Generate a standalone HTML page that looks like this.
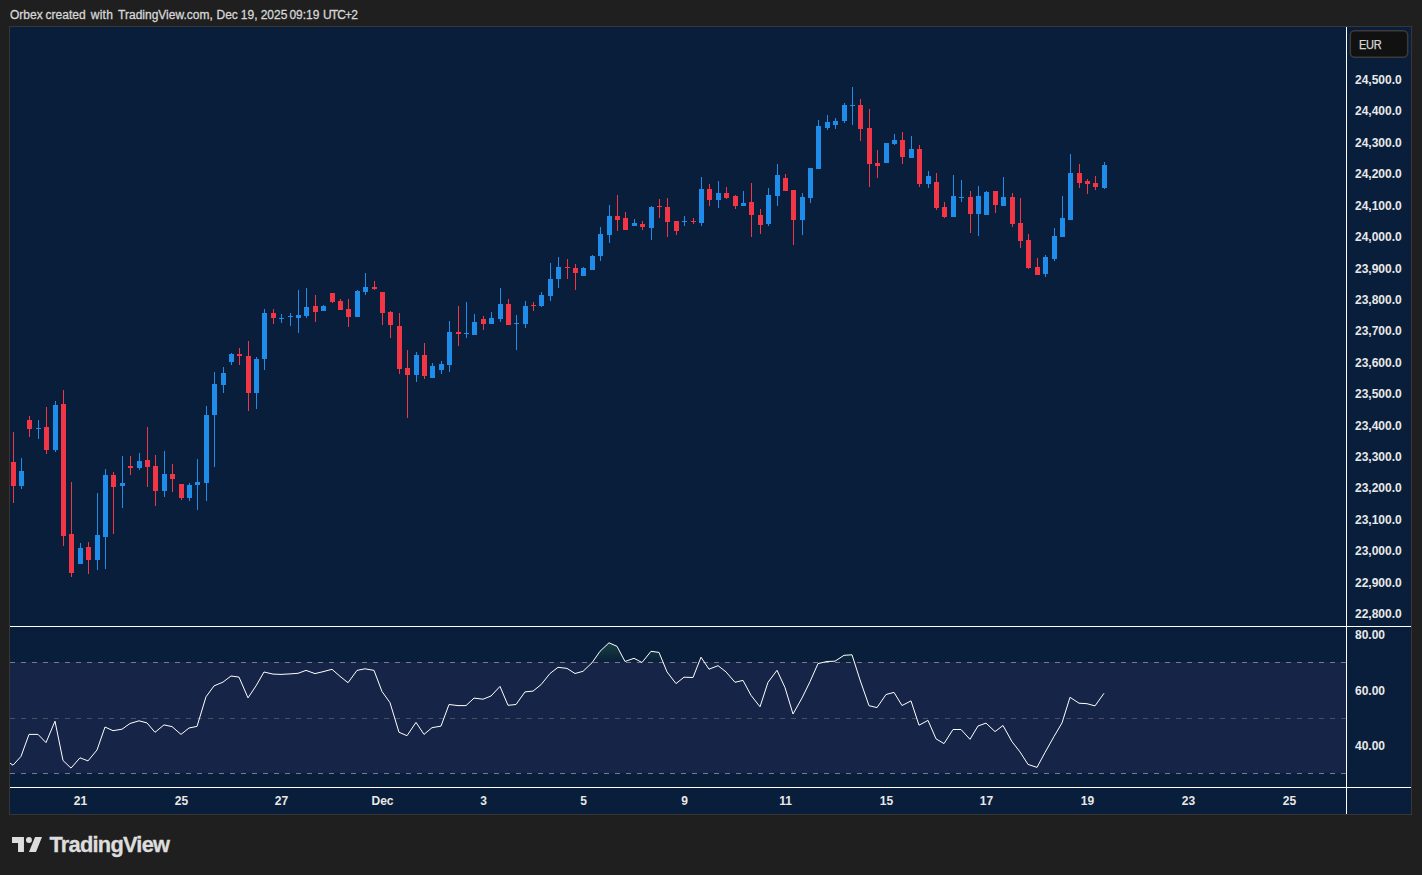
<!DOCTYPE html>
<html><head><meta charset="utf-8"><style>
html,body{margin:0;padding:0;}
body{width:1422px;height:875px;background:#1f1f1f;position:relative;overflow:hidden;font-family:"Liberation Sans",sans-serif;}
.hdr{position:absolute;left:10px;top:8px;font-size:12px;color:#d6d6d6;white-space:nowrap;-webkit-text-stroke:0.3px #d6d6d6;}
.pl{position:absolute;left:1355px;height:14px;line-height:14px;font-size:12px;font-weight:bold;color:#e8e8e8;white-space:nowrap;}
.tl{position:absolute;top:794px;width:60px;text-align:center;height:14px;line-height:14px;font-size:12px;font-weight:bold;color:#e8e8e8;white-space:nowrap;}
.eur{position:absolute;left:1358.5px;top:38px;height:14px;line-height:14px;font-size:12px;color:#d6d6d6;letter-spacing:-0.3px;-webkit-text-stroke:0.25px #d6d6d6;transform:scaleX(0.92);transform-origin:0 0;}
.tv{position:absolute;left:49.5px;top:831.5px;font-size:21.8px;font-weight:bold;color:#dddddd;line-height:26px;letter-spacing:-0.75px;-webkit-text-stroke:0.35px #dddddd;}
</style></head><body>
<svg width="1422" height="875" viewBox="0 0 1422 875" style="position:absolute;left:0;top:0">
<defs>
<clipPath id="cp"><rect x="10" y="27" width="1336" height="599"/></clipPath>
<clipPath id="cr"><rect x="10" y="627" width="1336" height="160"/></clipPath>
<clipPath id="cob"><rect x="10" y="560" width="1336" height="102.5"/></clipPath>
<linearGradient id="gob" gradientUnits="userSpaceOnUse" x1="0" y1="579.2" x2="0" y2="662.5">
<stop offset="0" stop-color="#4caf50" stop-opacity="1"/><stop offset="1" stop-color="#4caf50" stop-opacity="0"/>
</linearGradient>
</defs>
<rect x="9" y="26" width="1403" height="789" fill="#363636"/>
<rect x="10" y="27" width="1401" height="787" fill="#091e3b"/>
<g clip-path="url(#cp)" shape-rendering="crispEdges"><rect x="13" y="432" width="1" height="71" fill="#f23645"/><rect x="11" y="462" width="5" height="24" fill="#f23645"/><rect x="21" y="458" width="1" height="31" fill="#1e8ce8"/><rect x="19" y="471" width="5" height="15" fill="#1e8ce8"/><rect x="29" y="416" width="1" height="21" fill="#f23645"/><rect x="27" y="420" width="5" height="9" fill="#f23645"/><rect x="38" y="420" width="1" height="19" fill="#1e8ce8"/><rect x="36" y="428" width="5" height="1" fill="#1e8ce8"/><rect x="46" y="407" width="1" height="47" fill="#f23645"/><rect x="44" y="427" width="5" height="23" fill="#f23645"/><rect x="55" y="401" width="1" height="51" fill="#1e8ce8"/><rect x="53" y="405" width="5" height="45" fill="#1e8ce8"/><rect x="63" y="390" width="1" height="156" fill="#f23645"/><rect x="61" y="404" width="5" height="132" fill="#f23645"/><rect x="71" y="482" width="1" height="95" fill="#f23645"/><rect x="69" y="534" width="5" height="39" fill="#f23645"/><rect x="80" y="543" width="1" height="21" fill="#1e8ce8"/><rect x="78" y="548" width="5" height="16" fill="#1e8ce8"/><rect x="88" y="542" width="1" height="32" fill="#f23645"/><rect x="86" y="547" width="5" height="13" fill="#f23645"/><rect x="97" y="493" width="1" height="77" fill="#1e8ce8"/><rect x="95" y="535" width="5" height="25" fill="#1e8ce8"/><rect x="105" y="469" width="1" height="100" fill="#1e8ce8"/><rect x="103" y="475" width="5" height="62" fill="#1e8ce8"/><rect x="113" y="472" width="1" height="62" fill="#f23645"/><rect x="111" y="475" width="5" height="12" fill="#f23645"/><rect x="122" y="456" width="1" height="52" fill="#1e8ce8"/><rect x="120" y="483" width="5" height="3" fill="#1e8ce8"/><rect x="130" y="456" width="1" height="19" fill="#f23645"/><rect x="128" y="466" width="5" height="2" fill="#f23645"/><rect x="139" y="453" width="1" height="17" fill="#1e8ce8"/><rect x="137" y="461" width="5" height="7" fill="#1e8ce8"/><rect x="147" y="427" width="1" height="60" fill="#f23645"/><rect x="145" y="460" width="5" height="7" fill="#f23645"/><rect x="155" y="455" width="1" height="51" fill="#f23645"/><rect x="153" y="466" width="5" height="25" fill="#f23645"/><rect x="164" y="451" width="1" height="46" fill="#1e8ce8"/><rect x="162" y="474" width="5" height="17" fill="#1e8ce8"/><rect x="172" y="464" width="1" height="28" fill="#f23645"/><rect x="170" y="474" width="5" height="5" fill="#f23645"/><rect x="181" y="484" width="1" height="16" fill="#f23645"/><rect x="179" y="484" width="5" height="14" fill="#f23645"/><rect x="189" y="483" width="1" height="18" fill="#1e8ce8"/><rect x="187" y="485" width="5" height="13" fill="#1e8ce8"/><rect x="197" y="459" width="1" height="51" fill="#1e8ce8"/><rect x="195" y="482" width="5" height="3" fill="#1e8ce8"/><rect x="206" y="406" width="1" height="95" fill="#1e8ce8"/><rect x="204" y="415" width="5" height="68" fill="#1e8ce8"/><rect x="214" y="372" width="1" height="95" fill="#1e8ce8"/><rect x="212" y="384" width="5" height="31" fill="#1e8ce8"/><rect x="223" y="367" width="1" height="26" fill="#1e8ce8"/><rect x="221" y="373" width="5" height="12" fill="#1e8ce8"/><rect x="231" y="353" width="1" height="12" fill="#1e8ce8"/><rect x="229" y="354" width="5" height="8" fill="#1e8ce8"/><rect x="239" y="348" width="1" height="17" fill="#f23645"/><rect x="237" y="354" width="5" height="2" fill="#f23645"/><rect x="248" y="341" width="1" height="70" fill="#f23645"/><rect x="246" y="356" width="5" height="37" fill="#f23645"/><rect x="256" y="357" width="1" height="52" fill="#1e8ce8"/><rect x="254" y="359" width="5" height="34" fill="#1e8ce8"/><rect x="264" y="309" width="1" height="61" fill="#1e8ce8"/><rect x="262" y="313" width="5" height="46" fill="#1e8ce8"/><rect x="273" y="309" width="1" height="15" fill="#f23645"/><rect x="271" y="313" width="5" height="5" fill="#f23645"/><rect x="281" y="314" width="1" height="9" fill="#1e8ce8"/><rect x="279" y="318" width="5" height="1" fill="#1e8ce8"/><rect x="290" y="313" width="1" height="13" fill="#1e8ce8"/><rect x="288" y="316" width="5" height="1" fill="#1e8ce8"/><rect x="298" y="290" width="1" height="43" fill="#1e8ce8"/><rect x="296" y="315" width="5" height="3" fill="#1e8ce8"/><rect x="306" y="288" width="1" height="30" fill="#1e8ce8"/><rect x="304" y="307" width="5" height="9" fill="#1e8ce8"/><rect x="315" y="295" width="1" height="27" fill="#f23645"/><rect x="313" y="306" width="5" height="6" fill="#f23645"/><rect x="323" y="305" width="1" height="6" fill="#1e8ce8"/><rect x="321" y="306" width="5" height="5" fill="#1e8ce8"/><rect x="332" y="293" width="1" height="10" fill="#f23645"/><rect x="330" y="293" width="5" height="9" fill="#f23645"/><rect x="340" y="299" width="1" height="11" fill="#f23645"/><rect x="338" y="301" width="5" height="9" fill="#f23645"/><rect x="348" y="299" width="1" height="28" fill="#f23645"/><rect x="346" y="309" width="5" height="8" fill="#f23645"/><rect x="357" y="290" width="1" height="27" fill="#1e8ce8"/><rect x="355" y="291" width="5" height="26" fill="#1e8ce8"/><rect x="365" y="273" width="1" height="22" fill="#1e8ce8"/><rect x="363" y="287" width="5" height="5" fill="#1e8ce8"/><rect x="374" y="281" width="1" height="9" fill="#f23645"/><rect x="372" y="287" width="5" height="2" fill="#f23645"/><rect x="382" y="292" width="1" height="33" fill="#f23645"/><rect x="380" y="292" width="5" height="21" fill="#f23645"/><rect x="390" y="311" width="1" height="27" fill="#f23645"/><rect x="388" y="312" width="5" height="13" fill="#f23645"/><rect x="399" y="313" width="1" height="61" fill="#f23645"/><rect x="397" y="326" width="5" height="43" fill="#f23645"/><rect x="407" y="350" width="1" height="68" fill="#f23645"/><rect x="405" y="368" width="5" height="7" fill="#f23645"/><rect x="416" y="352" width="1" height="30" fill="#1e8ce8"/><rect x="414" y="355" width="5" height="20" fill="#1e8ce8"/><rect x="424" y="343" width="1" height="36" fill="#f23645"/><rect x="422" y="355" width="5" height="21" fill="#f23645"/><rect x="432" y="363" width="1" height="15" fill="#1e8ce8"/><rect x="430" y="366" width="5" height="12" fill="#1e8ce8"/><rect x="441" y="361" width="1" height="13" fill="#1e8ce8"/><rect x="439" y="364" width="5" height="6" fill="#1e8ce8"/><rect x="449" y="321" width="1" height="51" fill="#1e8ce8"/><rect x="447" y="332" width="5" height="33" fill="#1e8ce8"/><rect x="458" y="306" width="1" height="40" fill="#f23645"/><rect x="456" y="332" width="5" height="2" fill="#f23645"/><rect x="466" y="302" width="1" height="36" fill="#1e8ce8"/><rect x="464" y="333" width="5" height="1" fill="#1e8ce8"/><rect x="474" y="314" width="1" height="21" fill="#1e8ce8"/><rect x="472" y="322" width="5" height="13" fill="#1e8ce8"/><rect x="483" y="316" width="1" height="14" fill="#f23645"/><rect x="481" y="319" width="5" height="5" fill="#f23645"/><rect x="491" y="312" width="1" height="12" fill="#1e8ce8"/><rect x="489" y="318" width="5" height="6" fill="#1e8ce8"/><rect x="500" y="288" width="1" height="34" fill="#1e8ce8"/><rect x="498" y="304" width="5" height="15" fill="#1e8ce8"/><rect x="508" y="299" width="1" height="26" fill="#f23645"/><rect x="506" y="304" width="5" height="21" fill="#f23645"/><rect x="516" y="315" width="1" height="35" fill="#1e8ce8"/><rect x="514" y="323" width="5" height="1" fill="#1e8ce8"/><rect x="525" y="301" width="1" height="27" fill="#1e8ce8"/><rect x="523" y="306" width="5" height="18" fill="#1e8ce8"/><rect x="533" y="302" width="1" height="9" fill="#f23645"/><rect x="531" y="305" width="5" height="1" fill="#f23645"/><rect x="541" y="292" width="1" height="15" fill="#1e8ce8"/><rect x="539" y="295" width="5" height="11" fill="#1e8ce8"/><rect x="550" y="263" width="1" height="38" fill="#1e8ce8"/><rect x="548" y="279" width="5" height="17" fill="#1e8ce8"/><rect x="558" y="257" width="1" height="31" fill="#1e8ce8"/><rect x="556" y="267" width="5" height="12" fill="#1e8ce8"/><rect x="567" y="259" width="1" height="20" fill="#f23645"/><rect x="565" y="267" width="5" height="1" fill="#f23645"/><rect x="575" y="264" width="1" height="26" fill="#f23645"/><rect x="573" y="268" width="5" height="5" fill="#f23645"/><rect x="583" y="267" width="1" height="9" fill="#1e8ce8"/><rect x="581" y="268" width="5" height="8" fill="#1e8ce8"/><rect x="592" y="255" width="1" height="15" fill="#1e8ce8"/><rect x="590" y="256" width="5" height="14" fill="#1e8ce8"/><rect x="600" y="227" width="1" height="34" fill="#1e8ce8"/><rect x="598" y="234" width="5" height="22" fill="#1e8ce8"/><rect x="609" y="205" width="1" height="38" fill="#1e8ce8"/><rect x="607" y="216" width="5" height="19" fill="#1e8ce8"/><rect x="617" y="195" width="1" height="36" fill="#f23645"/><rect x="615" y="216" width="5" height="4" fill="#f23645"/><rect x="625" y="212" width="1" height="18" fill="#f23645"/><rect x="623" y="218" width="5" height="12" fill="#f23645"/><rect x="634" y="219" width="1" height="7" fill="#1e8ce8"/><rect x="632" y="223" width="5" height="3" fill="#1e8ce8"/><rect x="642" y="221" width="1" height="9" fill="#f23645"/><rect x="640" y="224" width="5" height="3" fill="#f23645"/><rect x="651" y="206" width="1" height="34" fill="#1e8ce8"/><rect x="649" y="207" width="5" height="21" fill="#1e8ce8"/><rect x="659" y="199" width="1" height="19" fill="#f23645"/><rect x="657" y="206" width="5" height="1" fill="#f23645"/><rect x="667" y="198" width="1" height="39" fill="#f23645"/><rect x="665" y="207" width="5" height="15" fill="#f23645"/><rect x="676" y="221" width="1" height="14" fill="#f23645"/><rect x="674" y="221" width="5" height="10" fill="#f23645"/><rect x="684" y="216" width="1" height="10" fill="#1e8ce8"/><rect x="682" y="221" width="5" height="1" fill="#1e8ce8"/><rect x="693" y="218" width="1" height="6" fill="#f23645"/><rect x="691" y="221" width="5" height="1" fill="#f23645"/><rect x="701" y="177" width="1" height="49" fill="#1e8ce8"/><rect x="699" y="189" width="5" height="34" fill="#1e8ce8"/><rect x="709" y="184" width="1" height="22" fill="#f23645"/><rect x="707" y="189" width="5" height="11" fill="#f23645"/><rect x="718" y="181" width="1" height="27" fill="#1e8ce8"/><rect x="716" y="193" width="5" height="7" fill="#1e8ce8"/><rect x="726" y="187" width="1" height="12" fill="#f23645"/><rect x="724" y="193" width="5" height="5" fill="#f23645"/><rect x="735" y="195" width="1" height="14" fill="#f23645"/><rect x="733" y="196" width="5" height="10" fill="#f23645"/><rect x="743" y="191" width="1" height="15" fill="#1e8ce8"/><rect x="741" y="203" width="5" height="3" fill="#1e8ce8"/><rect x="751" y="183" width="1" height="54" fill="#f23645"/><rect x="749" y="202" width="5" height="13" fill="#f23645"/><rect x="760" y="209" width="1" height="25" fill="#f23645"/><rect x="758" y="215" width="5" height="10" fill="#f23645"/><rect x="768" y="188" width="1" height="38" fill="#1e8ce8"/><rect x="766" y="195" width="5" height="29" fill="#1e8ce8"/><rect x="777" y="164" width="1" height="42" fill="#1e8ce8"/><rect x="775" y="175" width="5" height="21" fill="#1e8ce8"/><rect x="785" y="174" width="1" height="17" fill="#f23645"/><rect x="783" y="178" width="5" height="13" fill="#f23645"/><rect x="793" y="190" width="1" height="55" fill="#f23645"/><rect x="791" y="190" width="5" height="30" fill="#f23645"/><rect x="802" y="193" width="1" height="42" fill="#1e8ce8"/><rect x="800" y="197" width="5" height="23" fill="#1e8ce8"/><rect x="810" y="168" width="1" height="35" fill="#1e8ce8"/><rect x="808" y="168" width="5" height="30" fill="#1e8ce8"/><rect x="818" y="120" width="1" height="49" fill="#1e8ce8"/><rect x="816" y="126" width="5" height="43" fill="#1e8ce8"/><rect x="827" y="115" width="1" height="15" fill="#1e8ce8"/><rect x="825" y="122" width="5" height="6" fill="#1e8ce8"/><rect x="835" y="118" width="1" height="11" fill="#1e8ce8"/><rect x="833" y="121" width="5" height="4" fill="#1e8ce8"/><rect x="844" y="103" width="1" height="20" fill="#1e8ce8"/><rect x="842" y="105" width="5" height="16" fill="#1e8ce8"/><rect x="852" y="87" width="1" height="38" fill="#1e8ce8"/><rect x="850" y="105" width="5" height="1" fill="#1e8ce8"/><rect x="860" y="99" width="1" height="42" fill="#f23645"/><rect x="858" y="105" width="5" height="24" fill="#f23645"/><rect x="869" y="109" width="1" height="78" fill="#f23645"/><rect x="867" y="128" width="5" height="36" fill="#f23645"/><rect x="877" y="150" width="1" height="28" fill="#f23645"/><rect x="875" y="163" width="5" height="3" fill="#f23645"/><rect x="886" y="143" width="1" height="20" fill="#1e8ce8"/><rect x="884" y="143" width="5" height="20" fill="#1e8ce8"/><rect x="894" y="134" width="1" height="11" fill="#1e8ce8"/><rect x="892" y="140" width="5" height="4" fill="#1e8ce8"/><rect x="902" y="132" width="1" height="32" fill="#f23645"/><rect x="900" y="140" width="5" height="17" fill="#f23645"/><rect x="911" y="136" width="1" height="22" fill="#1e8ce8"/><rect x="909" y="149" width="5" height="9" fill="#1e8ce8"/><rect x="919" y="145" width="1" height="42" fill="#f23645"/><rect x="917" y="149" width="5" height="35" fill="#f23645"/><rect x="928" y="171" width="1" height="17" fill="#1e8ce8"/><rect x="926" y="176" width="5" height="8" fill="#1e8ce8"/><rect x="936" y="173" width="1" height="37" fill="#f23645"/><rect x="934" y="182" width="5" height="26" fill="#f23645"/><rect x="944" y="202" width="1" height="16" fill="#f23645"/><rect x="942" y="207" width="5" height="10" fill="#f23645"/><rect x="953" y="175" width="1" height="42" fill="#1e8ce8"/><rect x="951" y="196" width="5" height="21" fill="#1e8ce8"/><rect x="961" y="180" width="1" height="22" fill="#1e8ce8"/><rect x="959" y="197" width="5" height="1" fill="#1e8ce8"/><rect x="970" y="191" width="1" height="42" fill="#f23645"/><rect x="968" y="197" width="5" height="17" fill="#f23645"/><rect x="978" y="186" width="1" height="50" fill="#1e8ce8"/><rect x="976" y="196" width="5" height="18" fill="#1e8ce8"/><rect x="986" y="191" width="1" height="24" fill="#1e8ce8"/><rect x="984" y="192" width="5" height="23" fill="#1e8ce8"/><rect x="995" y="191" width="1" height="22" fill="#f23645"/><rect x="993" y="191" width="5" height="14" fill="#f23645"/><rect x="1003" y="177" width="1" height="29" fill="#1e8ce8"/><rect x="1001" y="197" width="5" height="9" fill="#1e8ce8"/><rect x="1012" y="193" width="1" height="34" fill="#f23645"/><rect x="1010" y="197" width="5" height="27" fill="#f23645"/><rect x="1020" y="198" width="1" height="50" fill="#f23645"/><rect x="1018" y="223" width="5" height="18" fill="#f23645"/><rect x="1028" y="234" width="1" height="35" fill="#f23645"/><rect x="1026" y="240" width="5" height="28" fill="#f23645"/><rect x="1037" y="258" width="1" height="17" fill="#f23645"/><rect x="1035" y="267" width="5" height="8" fill="#f23645"/><rect x="1045" y="255" width="1" height="22" fill="#1e8ce8"/><rect x="1043" y="257" width="5" height="17" fill="#1e8ce8"/><rect x="1054" y="228" width="1" height="33" fill="#1e8ce8"/><rect x="1052" y="236" width="5" height="23" fill="#1e8ce8"/><rect x="1062" y="196" width="1" height="41" fill="#1e8ce8"/><rect x="1060" y="218" width="5" height="19" fill="#1e8ce8"/><rect x="1070" y="154" width="1" height="66" fill="#1e8ce8"/><rect x="1068" y="173" width="5" height="47" fill="#1e8ce8"/><rect x="1079" y="164" width="1" height="24" fill="#f23645"/><rect x="1077" y="173" width="5" height="10" fill="#f23645"/><rect x="1087" y="179" width="1" height="15" fill="#f23645"/><rect x="1085" y="181" width="5" height="3" fill="#f23645"/><rect x="1095" y="176" width="1" height="14" fill="#f23645"/><rect x="1093" y="183" width="5" height="4" fill="#f23645"/><rect x="1104" y="162" width="1" height="27" fill="#1e8ce8"/><rect x="1102" y="165" width="5" height="23" fill="#1e8ce8"/></g>
<g clip-path="url(#cr)">
<rect x="10" y="662" width="1336" height="111" fill="#162448" shape-rendering="crispEdges"/>
<line x1="10" y1="662.5" x2="1346" y2="662.5" stroke="#787b86" stroke-width="1" stroke-dasharray="5 6" shape-rendering="crispEdges"/>
<line x1="10" y1="718.5" x2="1346" y2="718.5" stroke="#787b86" stroke-opacity="0.5" stroke-width="1" stroke-dasharray="5 6" shape-rendering="crispEdges"/>
<line x1="10" y1="773.5" x2="1346" y2="773.5" stroke="#787b86" stroke-width="1" stroke-dasharray="5 6" shape-rendering="crispEdges"/>
<g clip-path="url(#cob)"><polygon points="4.00,662.50 4.00,759.00 13.00,765.20 21.00,756.40 29.00,734.40 38.00,734.40 46.00,742.60 55.00,721.20 63.00,760.50 71.00,768.10 80.00,757.80 88.00,760.90 97.00,750.00 105.00,727.00 113.00,730.70 122.00,729.20 130.00,723.50 139.00,720.80 147.00,722.90 155.00,732.30 164.00,724.90 172.00,726.60 181.00,734.40 189.00,728.00 197.00,726.40 206.00,696.80 214.00,685.90 223.00,682.10 231.00,676.00 239.00,677.10 248.00,697.90 256.00,685.90 264.00,672.00 273.00,674.10 281.00,674.40 290.00,673.90 298.00,673.30 306.00,670.40 315.00,673.60 323.00,671.70 332.00,669.30 340.00,676.30 348.00,682.70 357.00,670.40 365.00,668.80 374.00,670.40 382.00,691.50 390.00,702.70 399.00,732.30 407.00,735.70 416.00,722.40 424.00,734.40 432.00,727.70 441.00,726.10 449.00,704.50 458.00,705.60 466.00,705.60 474.00,698.10 483.00,699.20 491.00,696.00 500.00,686.40 508.00,705.30 516.00,704.50 525.00,691.90 533.00,691.10 541.00,684.70 550.00,673.50 558.00,667.30 567.00,668.40 575.00,673.50 583.00,671.30 592.00,662.80 600.00,651.30 609.00,642.80 617.00,646.30 625.00,661.50 634.00,658.30 642.00,662.50 651.00,651.30 659.00,652.40 667.00,671.90 676.00,683.60 684.00,677.20 693.00,677.50 701.00,657.20 709.00,669.20 718.00,665.70 726.00,671.90 735.00,682.30 743.00,680.40 751.00,695.30 760.00,706.80 768.00,682.30 777.00,670.30 785.00,687.60 793.00,714.00 802.00,698.00 810.00,681.70 818.00,663.60 827.00,661.50 835.00,661.20 844.00,655.30 852.00,654.80 860.00,679.90 869.00,705.70 877.00,707.60 886.00,694.50 894.00,692.40 902.00,705.50 911.00,700.90 919.00,725.20 928.00,720.40 936.00,738.80 944.00,743.60 953.00,729.50 961.00,729.50 970.00,739.30 978.00,726.00 986.00,723.10 995.00,731.60 1003.00,725.50 1012.00,741.70 1020.00,751.90 1028.00,764.40 1037.00,767.40 1045.00,752.50 1054.00,736.50 1062.00,722.90 1070.00,697.30 1079.00,703.20 1087.00,703.70 1095.00,705.90 1104.00,693.30 1104.00,662.50" fill="url(#gob)"/></g>
<polyline points="4.00,759.00 13.00,765.20 21.00,756.40 29.00,734.40 38.00,734.40 46.00,742.60 55.00,721.20 63.00,760.50 71.00,768.10 80.00,757.80 88.00,760.90 97.00,750.00 105.00,727.00 113.00,730.70 122.00,729.20 130.00,723.50 139.00,720.80 147.00,722.90 155.00,732.30 164.00,724.90 172.00,726.60 181.00,734.40 189.00,728.00 197.00,726.40 206.00,696.80 214.00,685.90 223.00,682.10 231.00,676.00 239.00,677.10 248.00,697.90 256.00,685.90 264.00,672.00 273.00,674.10 281.00,674.40 290.00,673.90 298.00,673.30 306.00,670.40 315.00,673.60 323.00,671.70 332.00,669.30 340.00,676.30 348.00,682.70 357.00,670.40 365.00,668.80 374.00,670.40 382.00,691.50 390.00,702.70 399.00,732.30 407.00,735.70 416.00,722.40 424.00,734.40 432.00,727.70 441.00,726.10 449.00,704.50 458.00,705.60 466.00,705.60 474.00,698.10 483.00,699.20 491.00,696.00 500.00,686.40 508.00,705.30 516.00,704.50 525.00,691.90 533.00,691.10 541.00,684.70 550.00,673.50 558.00,667.30 567.00,668.40 575.00,673.50 583.00,671.30 592.00,662.80 600.00,651.30 609.00,642.80 617.00,646.30 625.00,661.50 634.00,658.30 642.00,662.50 651.00,651.30 659.00,652.40 667.00,671.90 676.00,683.60 684.00,677.20 693.00,677.50 701.00,657.20 709.00,669.20 718.00,665.70 726.00,671.90 735.00,682.30 743.00,680.40 751.00,695.30 760.00,706.80 768.00,682.30 777.00,670.30 785.00,687.60 793.00,714.00 802.00,698.00 810.00,681.70 818.00,663.60 827.00,661.50 835.00,661.20 844.00,655.30 852.00,654.80 860.00,679.90 869.00,705.70 877.00,707.60 886.00,694.50 894.00,692.40 902.00,705.50 911.00,700.90 919.00,725.20 928.00,720.40 936.00,738.80 944.00,743.60 953.00,729.50 961.00,729.50 970.00,739.30 978.00,726.00 986.00,723.10 995.00,731.60 1003.00,725.50 1012.00,741.70 1020.00,751.90 1028.00,764.40 1037.00,767.40 1045.00,752.50 1054.00,736.50 1062.00,722.90 1070.00,697.30 1079.00,703.20 1087.00,703.70 1095.00,705.90 1104.00,693.30" fill="none" stroke="#ffffff" stroke-width="1" stroke-linejoin="round"/>
</g>
<g shape-rendering="crispEdges" fill="#ffffff">
<rect x="10" y="626" width="1401" height="1"/>
<rect x="10" y="787" width="1401" height="1"/>
<rect x="1346" y="27" width="1" height="787"/>
</g>
<rect x="1350.3" y="30.8" width="57.4" height="26.4" rx="4.5" ry="4.5" fill="#111111" stroke="#3b3b3b" stroke-width="1.5"/>
</svg>
<div class="hdr" style="left:10.00px;letter-spacing:0px">Orbex</div><div class="hdr" style="left:45.60px;letter-spacing:0px">created</div><div class="hdr" style="left:90.70px;letter-spacing:0.3px">with</div><div class="hdr" style="left:118.10px;letter-spacing:0px">TradingView.com,</div><div class="hdr" style="left:216.50px;letter-spacing:0px">Dec</div><div class="hdr" style="left:240.80px;letter-spacing:0px">19,</div><div class="hdr" style="left:260.70px;letter-spacing:0px">2025</div><div class="hdr" style="left:289.40px;letter-spacing:0px">09:19</div><div class="hdr" style="left:323.10px;letter-spacing:-0.9px">UTC+2</div>
<div class="pl" style="top:72.5px">24,500.0</div><div class="pl" style="top:103.5px">24,400.0</div><div class="pl" style="top:135.5px">24,300.0</div><div class="pl" style="top:166.5px">24,200.0</div><div class="pl" style="top:198.5px">24,100.0</div><div class="pl" style="top:229.5px">24,000.0</div><div class="pl" style="top:261.5px">23,900.0</div><div class="pl" style="top:292.5px">23,800.0</div><div class="pl" style="top:323.5px">23,700.0</div><div class="pl" style="top:355.5px">23,600.0</div><div class="pl" style="top:386.5px">23,500.0</div><div class="pl" style="top:418.5px">23,400.0</div><div class="pl" style="top:449.5px">23,300.0</div><div class="pl" style="top:480.5px">23,200.0</div><div class="pl" style="top:512.5px">23,100.0</div><div class="pl" style="top:543.5px">23,000.0</div><div class="pl" style="top:575.5px">22,900.0</div><div class="pl" style="top:606.5px">22,800.0</div><div class="pl" style="top:627.5px">80.00</div><div class="pl" style="top:683.8px">60.00</div><div class="pl" style="top:738.5px">40.00</div>
<div class="tl" style="left:50.5px">21</div><div class="tl" style="left:151.5px">25</div><div class="tl" style="left:251.5px">27</div><div class="tl" style="left:352.5px">Dec</div><div class="tl" style="left:453.5px">3</div><div class="tl" style="left:553.5px">5</div><div class="tl" style="left:654.5px">9</div><div class="tl" style="left:755.5px">11</div><div class="tl" style="left:856.5px">15</div><div class="tl" style="left:956.5px">17</div><div class="tl" style="left:1057.5px">19</div><div class="tl" style="left:1158.5px">23</div><div class="tl" style="left:1259.5px">25</div>
<div class="eur">EUR</div>
<svg width="30" height="16" viewBox="0 0 30 16" style="position:absolute;left:12px;top:837px">
<path d="M0 0H11.95V15H6.05V5.9H0Z" fill="#dddddd"/>
<circle cx="16.96" cy="2.95" r="2.95" fill="#dddddd"/>
<path d="M23.1 0H30.05L24 15H16.95Z" fill="#dddddd"/>
</svg>
<div class="tv">TradingView</div>
</body></html>
